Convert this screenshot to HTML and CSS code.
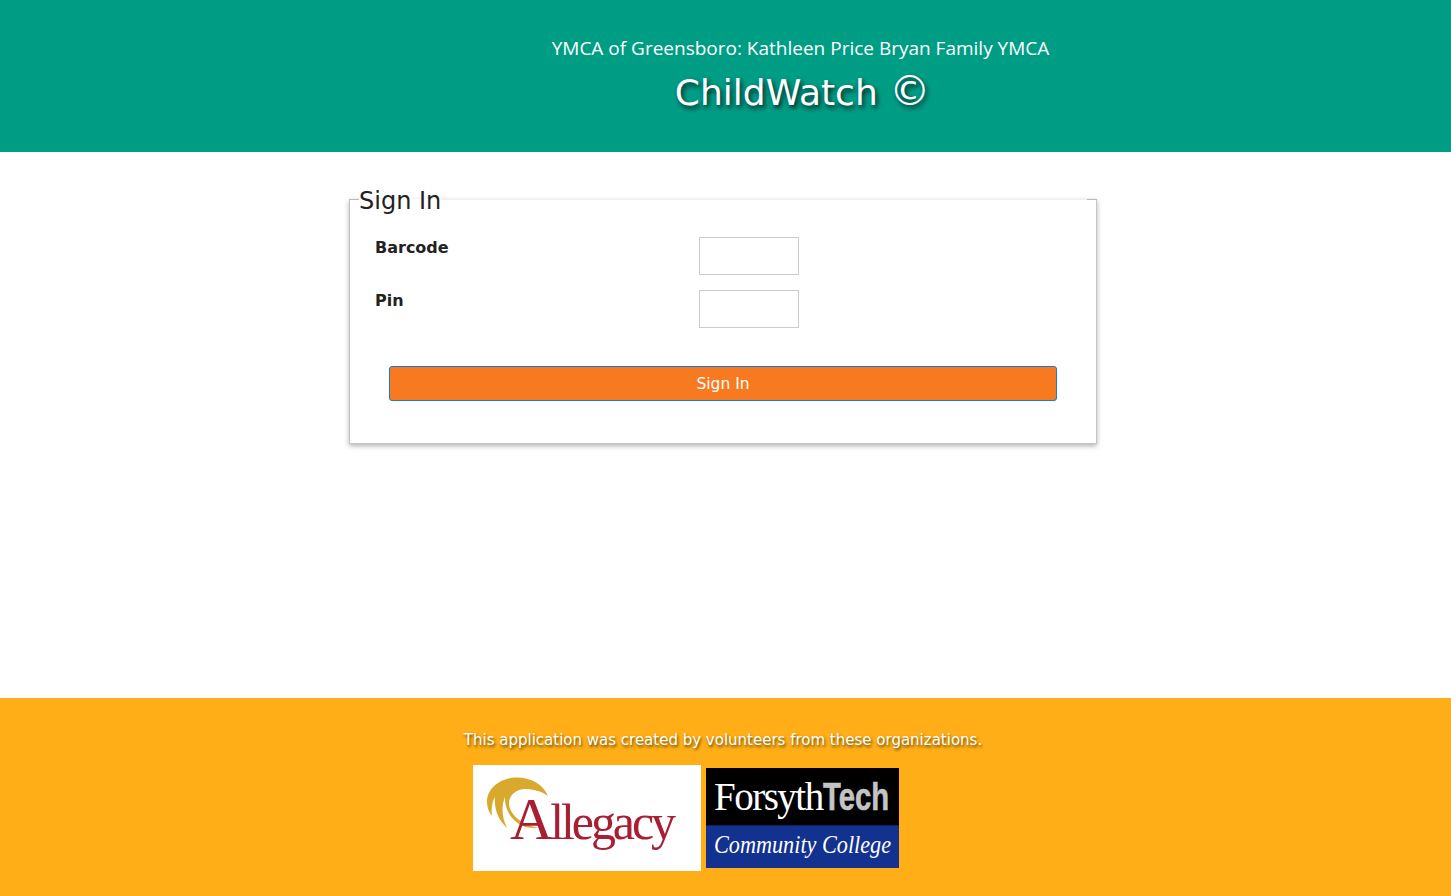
FILE: index.html
```html
<!DOCTYPE html>
<html lang="en">
<head>
    <meta charset="UTF-8">
    <meta name="viewport" content="width=device-width, initial-scale=1.0">
    <title>ChildWatch</title>
    <link rel="stylesheet" href="styles.css">
</head>
<body>
    <header class="top-bar">
        <div class="branch-name">YMCA of Greensboro: Kathleen Price Bryan Family YMCA</div>
        <h1 class="app-name">ChildWatch <span class="copy-mark">©</span></h1>
    </header>

    <main class="content">
        <form class="sign-in">
            <fieldset class="sign-in-box">
                <legend>Sign In</legend>
                <div class="field-row">
                    <label for="barcode">Barcode</label>
                    <input id="barcode" type="text">
                </div>
                <div class="field-row">
                    <label for="pin">Pin</label>
                    <input id="pin" type="password">
                </div>
                <button class="sign-in-btn" type="button">Sign In</button>
            </fieldset>
        </form>
    </main>

    <footer class="bottom-bar">
        <p class="credits">This application was created by volunteers from these organizations.</p>
        <div class="logos">
            <svg class="logo-allegacy" width="228" height="106" viewBox="0 0 228 106" role="img" aria-label="Allegacy">
                <rect width="228" height="106" fill="#fff"/>
                <path d="M75 31C71 20 58 12 43 12.5C27 13 14 23 14 37C14 43 16 47 19 51C18 44 19 37 22 32C21 44 25 55 34 63C29 53 28 41 32 32C31 46 42 65 65 63C50 60 36 50 36 38C36 30 44 24 52 24C60 24 68 26 75 31Z" fill="#d9a92e"/>
                <text class="allegacy-word" x="37" y="74"><tspan class="allegacy-cap">A</tspan>llegacy</text>
            </svg>
            <svg class="logo-forsyth" width="193" height="100" viewBox="0 0 193 100" role="img" aria-label="Forsyth Tech Community College">
                <rect width="193" height="58" fill="#000"/>
                <rect y="58" width="193" height="42" fill="#13318f"/>
                <rect y="57" width="193" height="1" fill="#0b1f66"/>
                <text class="forsyth-word" x="8" y="42">Forsyth</text>
                <text class="tech-word" transform="translate(117 42) scale(0.75 1)">Tech</text>
                <text class="college-word" transform="translate(8 85) scale(0.889 1)">Community College</text>
            </svg>
        </div>
    </footer>
</body>
</html>
```

FILE: styles.css
```css
body {
    margin: 0;
    min-height: 896px;
    display: flex;
    flex-direction: column;
    background: #fff;
    color: #222;
    font-family: "DejaVu Sans", Verdana, sans-serif;
}

.top-bar {
    height: 152px;
    box-sizing: border-box;
    padding: 36px 0 0 150px;
    background: #009d85;
    color: #fff;
    text-align: center;
}

.branch-name {
    font-family: "Open Sans", "Noto Sans", sans-serif;
    font-size: 19px;
    line-height: 25px;
}

.app-name {
    margin: 7px 0 0;
    padding-left: 4px;
    font-size: 36px;
    font-weight: normal;
    line-height: 50px;
    text-shadow: 2px 3px 5px #022;
}

.copy-mark {
    font-size: 41px;
    line-height: 40px;
}

.content {
    flex: 1;
}

.sign-in {
    width: 748px;
    margin: 31px 0 0 349px;
}

.sign-in-box {
    position: relative;
    margin: 0;
    padding: 22px 39px 42px 25px;
    border: 1px solid #c4c4c4;
    border-top-color: #f0f0f0;
    box-shadow: 0 2px 5px rgba(0, 0, 0, 0.3);
}

/* the darker ends of the top border */
.sign-in-box::before,
.sign-in-box::after {
    content: "";
    position: absolute;
    top: -16px;
    width: 10px;
    height: 1px;
    background: #bbb;
}

.sign-in-box::before {
    left: -1px;
}

.sign-in-box::after {
    right: -1px;
}

.sign-in-box legend {
    margin-left: -16px;
    padding: 4px 0 0;
    font-size: 24px;
    line-height: 28px;
}

.field-row {
    display: flex;
    height: 53.4px;
}

.field-row label {
    width: 324px;
    font-size: 16px;
    font-weight: bold;
    line-height: 22px;
}

.field-row input {
    width: 100px;
    height: 37.5px;
    box-sizing: border-box;
    border: 1px solid #ccc;
    padding: 0 6px;
}

.sign-in-btn {
    display: block;
    width: 668px;
    height: 35px;
    margin: 22px 0 0 14px;
    padding: 2px 0 0;
    border: 1px solid #1b78dc;
    border-radius: 3px;
    background: #f77a20;
    color: #fff;
    font-family: "DejaVu Sans", Verdana, sans-serif;
    font-size: 15.5px;
}

.bottom-bar {
    height: 198px;
    box-sizing: border-box;
    padding-top: 33px;
    background: #ffae17;
}

.credits {
    margin: 0;
    padding-right: 5px;
    color: #fff;
    font-size: 15px;
    line-height: 18px;
    text-align: center;
    text-shadow: 1px 2px 3px #5e4100;
}

.logos {
    display: flex;
    align-items: center;
    gap: 5px;
    margin: 16px 0 0 473px;
}

.allegacy-word {
    font-family: "Liberation Serif", serif;
    font-size: 50px;
    letter-spacing: -3.1px;
    fill: #a81e33;
}

.allegacy-cap {
    font-size: 60px;
}

.forsyth-word {
    font-family: "Liberation Serif", serif;
    font-size: 39px;
    letter-spacing: -1.5px;
    fill: #fff;
}

.tech-word {
    font-family: "Liberation Sans", sans-serif;
    font-size: 39px;
    font-weight: bold;
    fill: #c4c4c4;
    stroke: #c4c4c4;
    stroke-width: 0.6px;
}

.college-word {
    font-family: "Liberation Serif", serif;
    font-size: 25px;
    font-style: italic;
    fill: #fff;
}
```
